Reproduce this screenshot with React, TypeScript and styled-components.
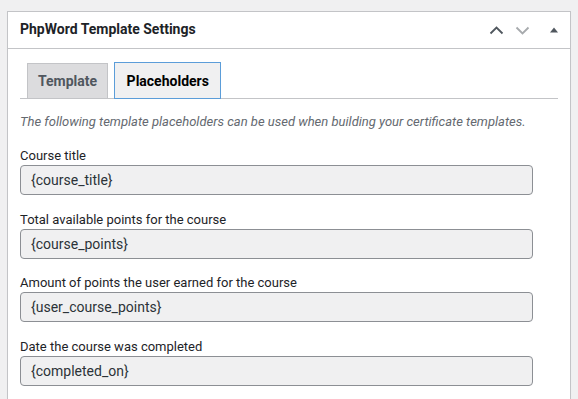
import React from "react";
import styled, { createGlobalStyle } from "styled-components";

const GlobalStyle = createGlobalStyle`
  html, body {
    margin: 0;
    padding: 0;
    background: #f0f0f1;
    font-family: Roboto, "Liberation Sans", Arial, sans-serif;
    color: #1d2327;
  }
`;

const Page = styled.div`
  padding: 11px 7px 0 7px;
`;

const Panel = styled.section`
  background: #fff;
  border: 1px solid #c3c4c7;
  box-shadow: 0 1px 1px rgba(0, 0, 0, 0.04);
`;

const Header = styled.div`
  display: flex;
  align-items: center;
  height: 36px;
  border-bottom: 1px solid #c3c4c7;
`;

const Title = styled.h2`
  flex: 1;
  margin: 0;
  padding-left: 12px;
  font-size: 14px;
  font-weight: 700;
  line-height: 1.4;
  color: #1d2327;
`;

const Controls = styled.div`
  display: flex;
  align-items: center;
  height: 100%;
`;

const HandleButton = styled.button<{ $wide?: boolean }>`
  display: flex;
  align-items: center;
  justify-content: center;
  width: ${({ $wide }) => ($wide ? "32px" : "26px")};
  margin-left: ${({ $wide }) => ($wide ? "3px" : "0")};
  height: 36px;
  padding: 0;
  border: 0;
  background: transparent;
  cursor: pointer;
`;

const Body = styled.div`
  padding: 13px 12px 12px 12px;
`;

const TabNav = styled.div`
  display: flex;
  align-items: flex-end;
  padding-left: 7px;
  border-bottom: 1px solid #c3c4c7;
`;

const Tab = styled.button<{ $active?: boolean }>`
  box-sizing: border-box;
  position: relative;
  height: ${({ $active }) => ($active ? "37px" : "35px")};
  margin: ${({ $active }) => ($active ? "0 0 -1px 6px" : "0")};
  padding: 0 ${({ $active }) => ($active ? "11.5px" : "10px")};
  border: 1px solid ${({ $active }) => ($active ? "#5b9dd9" : "#c3c4c7")};
  border-bottom: ${({ $active }) => ($active ? "1px solid #5b9dd9" : "none")};
  background: ${({ $active }) => ($active ? "#f0f0f1" : "#dcdcde")};
  color: ${({ $active }) => ($active ? "#000" : "#50575e")};
  font-family: inherit;
  font-size: 14px;
  font-weight: 700;
  cursor: pointer;
`;

const Description = styled.p`
  margin: 13px 0 15px 0;
  font-size: 13px;
  line-height: 19px;
  font-style: italic;
  color: #646970;
`;

const Field = styled.div`
  margin-bottom: 14.5px;
`;

const Label = styled.label`
  display: block;
  font-size: 13px;
  line-height: 19px;
  color: #1d2327;
`;

const Input = styled.input`
  box-sizing: border-box;
  display: block;
  width: 513px;
  height: 30px;
  margin: 0;
  padding: 0 10px;
  border: 1px solid #8c8f94;
  border-radius: 4px;
  background: #f0f0f1;
  font-family: inherit;
  font-size: 14px;
  color: #2c3338;
  outline: none;
`;

const placeholders = [
  { label: "Course title", value: "{course_title}" },
  { label: "Total available points for the course", value: "{course_points}" },
  { label: "Amount of points the user earned for the course", value: "{user_course_points}" },
  { label: "Date the course was completed", value: "{completed_on}" },
];

const Chevron = ({ up, color }: { up?: boolean; color: string }) => (
  <svg width="15" height="9" viewBox="0 0 15 9">
    <path
      d={up ? "M1.5 7.5 L7.5 1.5 L13.5 7.5" : "M1.5 1.5 L7.5 7.5 L13.5 1.5"}
      fill="none"
      stroke={color}
      strokeWidth="1.8"
    />
  </svg>
);

const App = () => {
  return (
    <Page>
      <GlobalStyle />
      <Panel>
        <Header>
          <Title>PhpWord Template Settings</Title>
          <Controls>
            <HandleButton aria-label="Move up">
              <Chevron up color="#50575e" />
            </HandleButton>
            <HandleButton aria-label="Move down">
              <Chevron color="#a7aaad" />
            </HandleButton>
            <HandleButton $wide aria-label="Toggle panel">
              <svg width="8" height="6" viewBox="0 0 8 6">
                <polygon points="0,5.5 4,0.5 8,5.5" fill="#50575e" />
              </svg>
            </HandleButton>
          </Controls>
        </Header>
        <Body>
          <TabNav>
            <Tab>Template</Tab>
            <Tab $active>Placeholders</Tab>
          </TabNav>
          <Description>
            The following template placeholders can be used when building your certificate templates.
          </Description>
          {placeholders.map((p) => (
            <Field key={p.value}>
              <Label>{p.label}</Label>
              <Input readOnly value={p.value} />
            </Field>
          ))}
        </Body>
      </Panel>
    </Page>
  );
};

export default App;
